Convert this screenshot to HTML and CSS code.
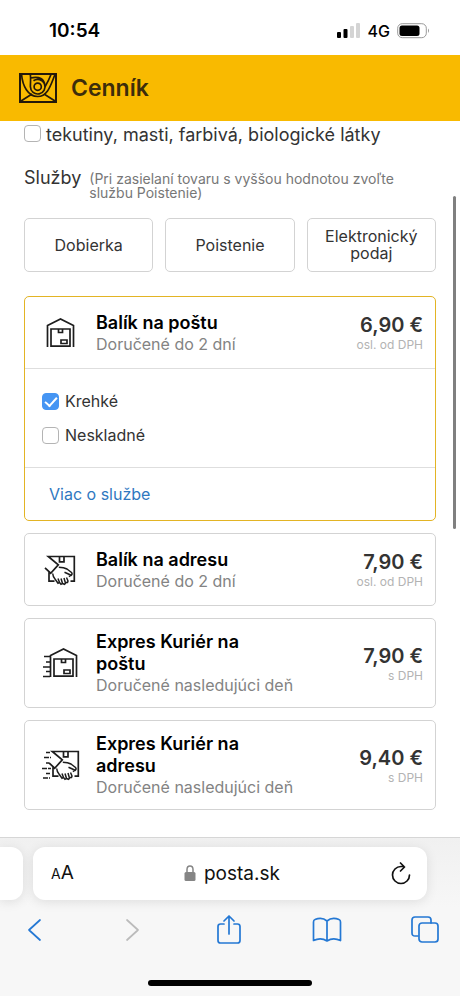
FILE: index.html
```html
<!DOCTYPE html>
<html lang="sk">
<head>
<meta charset="utf-8">
<meta name="viewport" content="width=device-width, initial-scale=1">
<title>Cenník</title>
<link rel="stylesheet" href="styles.css">
</head>
<body>
<svg class="defs" aria-hidden="true">
  <defs>
    <g id="house">
      <path d="M3.500 31V9.500L16.500 3L29.500 9.500V31"/>
      <path d="M7 13H26V30.200H7ZM14.500 13V16.500H18.500V13M17 24H23V27.500H17Z"/>
    </g>
    <g id="hand">
      <path d="M26.500 28.200H30.300V3.500H4.300L14.300 11.800L6.700 20.200L1 14.800M5 19V28.200H10.500M15.500 3.500V8.800H20V3.500"/>
      <path d="M14.800 14.200Q20 14.200 23 16L27.500 19.500Q28.800 21 27.200 22.300L20.500 19.300M8.700 20.500Q9 24 11 26L14 30.300L15.500 29.500L14 25.500M15.500 29.500L17 31.300L18.500 30.500L17 25.500M18.500 30.500L20.500 31.300L21.500 30.300L20 25M21.500 29.500L23.500 29.500L24 28L22.500 24.500M24.800 23.500L26.500 22.500" stroke-width="1.500"/>
    </g>
  </defs>
</svg>
<div class="screen">
  <div class="status">
    <span class="clock">10:54</span>
    <span class="signals">
      <svg width="24" height="16" viewBox="0 0 24 16"><rect x="0" y="9" width="4" height="6" rx="1"/><rect x="6.500" y="6" width="4" height="9" rx="1"/><rect x="13" y="3" width="4" height="12" rx="1" fill="#d4d4d4"/><rect x="19" y="0" width="4" height="15" rx="1" fill="#d4d4d4"/></svg>
      <span>4G</span>
      <svg width="33" height="16" viewBox="0 0 33 16"><rect x=".7" y=".7" width="28.600" height="14" rx="4.500" fill="none" stroke="#999"/><rect x="2.500" y="2.500" width="20" height="10.500" rx="2.500"/><path d="M31 5.500Q33 7.700 31 10Z" fill="#999"/></svg>
    </span>
  </div>
  <header class="header">
    <svg class="logo" viewBox="0 0 40 32" fill="none" stroke="#24190a" stroke-width="1.700"><path d="M2 2H38V30H2Z" stroke-width="2"/><path d="M3.500 2C4.500 14 10 24.500 19.700 24.500C30 24.500 33 12 37 2.500"/><path d="M12.200 2C13 5 12.400 10 12.400 14.700A7.300 7.300 0 1 0 15.500 8.700M12.500 6Q26 3 27 14"/><path d="M33 2.500Q30.500 9 27 14.700"/><circle cx="19.700" cy="14.700" r="3.600"/><path d="M3 29L14 22M37 29L26 22"/></svg>
    <h1>Cenník</h1>
  </header>
  <main>
    <label class="check lead"><input type="checkbox">tekutiny, masti, farbivá, biologické látky</label>
    <div class="services"><h2>Služby</h2><p>(Pri zasielaní tovaru s vyššou hodnotou zvoľte službu Poistenie)</p></div>
    <div class="options"><button>Dobierka</button><button>Poistenie</button><button>Elektronický podaj</button></div>
    <article class="card selected">
      <div class="row">
        <svg class="icon" viewBox="0 0 34 34"><use href="#house"/></svg>
        <div class="name"><h3>Balík na poštu</h3><p>Doručené do 2 dní</p></div>
        <div class="price"><strong>6,90 €</strong><small>osl. od DPH</small></div>
      </div>
      <div class="traits">
        <label class="check"><input type="checkbox" checked>Krehké</label>
        <label class="check"><input type="checkbox">Neskladné</label>
      </div>
      <div class="more"><a href="#sluzba">Viac o službe</a></div>
    </article>
    <article class="card">
      <div class="row">
        <svg class="icon" viewBox="0 0 34 34"><use href="#hand"/></svg>
        <div class="name"><h3>Balík na adresu</h3><p>Doručené do 2 dní</p></div>
        <div class="price"><strong>7,90 €</strong><small>osl. od DPH</small></div>
      </div>
    </article>
    <article class="card">
      <div class="row">
        <svg class="icon wide" viewBox="0 0 40 34"><use href="#house" x="5"/><path d="M2 10.500H8M4 16H8M1 21H8M4 25.500H8M1 30.500H8"/></svg>
        <div class="name"><h3>Expres Kuriér na poštu</h3><p>Doručené nasledujúci deň</p></div>
        <div class="price"><strong>7,90 €</strong><small>s DPH</small></div>
      </div>
    </article>
    <article class="card">
      <div class="row">
        <svg class="icon wide" viewBox="0 0 40 34"><use href="#hand" x="6"/><path d="M4 4.500H8M2 9.500H9M4 15H7M0 20.500H9M4 25.500H8M1 30H8" stroke-dasharray="5 1"/></svg>
        <div class="name"><h3>Expres Kuriér na adresu</h3><p>Doručené nasledujúci deň</p></div>
        <div class="price"><strong>9,40 €</strong><small>s DPH</small></div>
      </div>
    </article>
    <div class="scrollbar"></div>
  </main>
  <footer>
    <div class="tabs">
      <div class="previous"></div>
      <div class="address">
        <button class="text-size" aria-label="Veľkosť textu"><small>A</small>A</button>
        <span class="domain"><svg width="12" height="17" viewBox="0 0 12 17"><path d="M3 8V4.500a3 3.500 0 0 1 6 0V8" fill="none" stroke="#858585" stroke-width="1.500"/><rect x=".5" y="7" width="11" height="9" rx="1.500" fill="#858585"/></svg>posta.sk</span>
        <button aria-label="Obnoviť"><svg class="reload" width="22" height="24" viewBox="0 0 22 24"><path d="M19.500 13A8.500 8.500 0 1 1 11 4.500H14M10.500 1L14.500 5L10.500 9"/></svg></button>
      </div>
    </div>
    <nav>
      <button aria-label="Späť"><svg width="28" height="30" viewBox="0 0 28 30"><path d="M19 5L8 15L19 25"/></svg></button>
      <button aria-label="Ďalej" disabled><svg width="28" height="30" viewBox="0 0 28 30"><path d="M9 5L20 15L9 25"/></svg></button>
      <button aria-label="Zdieľať"><svg width="28" height="30" viewBox="0 0 28 30"><path d="M9 9H5.500Q3 9 3 11.500V25.500Q3 28 5.500 28H22.500Q25 28 25 25.500V11.500Q25 9 22.500 9H19M14 19V1.500M9 6L14 1L19 6"/></svg></button>
      <button aria-label="Záložky"><svg width="30" height="30" viewBox="0 0 30 30"><path d="M15 6V26M15 6Q10 1.500 3 4.500Q1.500 5 1.500 7V25.500Q9 22 15 26Q21 22 28.500 25.500V7Q28.500 5 27 4.500Q20 1.500 15 6"/></svg></button>
      <button aria-label="Karty"><svg width="28" height="30" viewBox="0 0 28 30"><path d="M7 21H4Q1 21 1 18V5Q1 2 4 2H17Q20 2 20 5V8"/><rect x="8" y="8" width="19" height="19" rx="3"/></svg></button>
    </nav>
    <div class="home"></div>
  </footer>
</div>
</body>
</html>
```
FILE: styles.css
```css
* { box-sizing: border-box; }
body { margin: 0; background: #fff; color: #333; font: 16px/20px Inter, "Liberation Sans", sans-serif; }
h1, h2, h3, p { margin: 0; }
button { padding: 0; border: 0; background: none; color: inherit; font: inherit; }
.defs { position: absolute; width: 0; height: 0; }
.screen { min-height: 100vh; display: flex; flex-direction: column; overflow-x: hidden; }
.status { height: 55px; padding: 6px 30px 0 49px; display: flex; align-items: center; justify-content: space-between; color: #000; }
.clock { font-size: 19px; font-weight: 600; }
.signals { display: flex; align-items: center; gap: 7px; font-weight: 500; }
.header { height: 66px; padding: 0 18px; display: flex; align-items: center; gap: 13px; background: #f9ba00; }
.logo { width: 40px; height: 32px; }
h1 { color: #3d2d0b; font-size: 23px; line-height: 28px; font-weight: 600; }
main { position: relative; flex: 1; padding: 3px 24px 27px; }
.check { display: flex; align-items: center; gap: 6px; }
.check input { appearance: none; width: 17px; height: 17px; margin: 0; border: 1px solid #b4b4b4; border-radius: 4px; background: #fff; }
.check input:checked { border-color: #4595f3; background: #4595f3; display: grid; place-items: center; }
.check input:checked::before { content: ""; width: 10px; height: 5px; border: solid #fff; border-width: 0 0 2px 2px; transform: translateY(-1px) rotate(-48deg); }
.lead { gap: 5px; font-size: 18px; line-height: 22px; }
.lead input { margin-bottom: 4px; }
.services { margin-top: 20px; display: flex; gap: 8px; }
h2 { font-size: 18px; line-height: 24px; font-weight: 400; }
.services p { padding-top: 6px; color: #777; font-size: 14px; line-height: 14px; }
.options { margin-top: 18px; display: grid; grid-template-columns: repeat(3, 1fr); gap: 12px; }
.options button { height: 54px; padding: 0 14px; border: 1px solid #d3d3d3; border-radius: 5px; line-height: 17px; }
.card { margin-top: 12px; border: 1px solid #d3d3d3; border-radius: 5px; }
.selected { margin-top: 24px; border-color: #e3b424; }
.row { min-height: 71px; padding: 12px; display: flex; align-items: center; }
.icon { width: 34px; height: 34px; margin: 0 18px 0 7px; flex: none; fill: none; stroke: #1d1d1d; stroke-width: 1.700; overflow: visible; }
.icon.wide { width: 40px; margin: 0 14px 0 5px; }
.name { flex: 1; }
.name h3 { max-width: 180px; color: #000; font-size: 18px; line-height: 22px; font-weight: 600; }
.name p { color: #838383; font-size: 16px; line-height: 20px; }
.price { display: flex; flex-direction: column; text-align: right; }
.price strong { font-size: 20px; line-height: 24px; font-weight: 600; }
.price small { color: #b3b3b3; font-size: 12px; line-height: 15px; }
.traits { padding: 22px 17px; border: solid #dedede; border-width: 1px 0; display: grid; gap: 14px; }
.more { padding: 16px 24px; }
a { color: #2f78bf; text-decoration: none; }
.scrollbar { position: absolute; top: 75px; right: 4px; width: 3px; height: 333px; border-radius: 2px; background: #808080; }
footer { border-top: 1px solid #d6d6d6; background: linear-gradient(#f0f0f0, #f7f7f7 70px); }
.tabs { padding: 9px 33px 0 0; display: flex; gap: 10px; }
.previous, .address { height: 53px; background: #fff; box-shadow: 0 2px 12px #0000001a; }
.previous { width: 23px; border-radius: 0 12px 12px 0; }
.address { flex: 1; padding: 0 15px 0 18px; border-radius: 12px; display: flex; align-items: center; justify-content: space-between; color: #111; font-size: 19px; }
.text-size small { font-size: 14px; }
.domain { display: flex; align-items: center; gap: 8px; }
.reload { display: block; fill: none; stroke: #111; stroke-width: 1.700; stroke-linecap: round; stroke-linejoin: round; }
nav { height: 60px; padding: 0 21px; display: flex; align-items: center; justify-content: space-between; }
nav button { height: 30px; }
nav svg { display: block; fill: none; stroke: #2478d4; stroke-width: 1.700; stroke-linecap: round; stroke-linejoin: round; }
nav button:disabled svg { stroke: #bbb; }
.home { width: 164px; height: 6px; margin: 20px auto 10px; border-radius: 3px; background: #000; }
```
